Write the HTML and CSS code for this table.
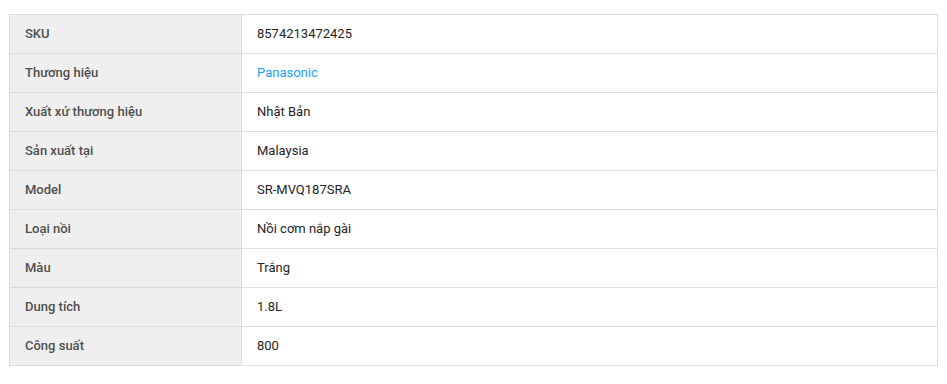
FILE: index.html
```html
<!DOCTYPE html>
<html lang="vi">
<head>
<meta charset="utf-8">
<link rel="stylesheet" href="styles.css">
</head>
<body>
<table class="spec">
  <tbody>
    <tr><td class="label">SKU</td><td class="value">8574213472425</td></tr>
    <tr><td class="label">Thương hiệu</td><td class="value"><a class="link" href="#">Panasonic</a></td></tr>
    <tr><td class="label">Xuất xứ thương hiệu</td><td class="value">Nhật Bản</td></tr>
    <tr><td class="label">Sản xuất tại</td><td class="value">Malaysia</td></tr>
    <tr><td class="label">Model</td><td class="value">SR-MVQ187SRA</td></tr>
    <tr><td class="label">Loại nồi</td><td class="value">Nồi cơm nắp gài</td></tr>
    <tr><td class="label">Màu</td><td class="value">Trắng</td></tr>
    <tr><td class="label">Dung tích</td><td class="value">1.8L</td></tr>
    <tr><td class="label">Công suất</td><td class="value">800</td></tr>
  </tbody>
</table>
</body>
</html>
```

FILE: styles.css
```css
html, body {
  margin: 0;
  padding: 0;
  background: #fff;
}
body {
  padding: 14px 9px 0 9px;
  font-family: Roboto, "Noto Sans", sans-serif;
  font-size: 13px;
  color: #333;
}
.spec {
  width: 929px;
  border-collapse: collapse;
  border: 1px solid #ddd;
  table-layout: fixed;
}
.spec td {
  border: 1px solid #ddd;
  padding: 10px 15px;
  line-height: 18px;
  vertical-align: middle;
}
.label {
  width: 201px;
  background: #efefef;
  font-weight: 500;
  color: #4f4f4f;
}
.value {
  color: #242424;
}
.link {
  color: #189eff;
  text-decoration: none;
}
```
